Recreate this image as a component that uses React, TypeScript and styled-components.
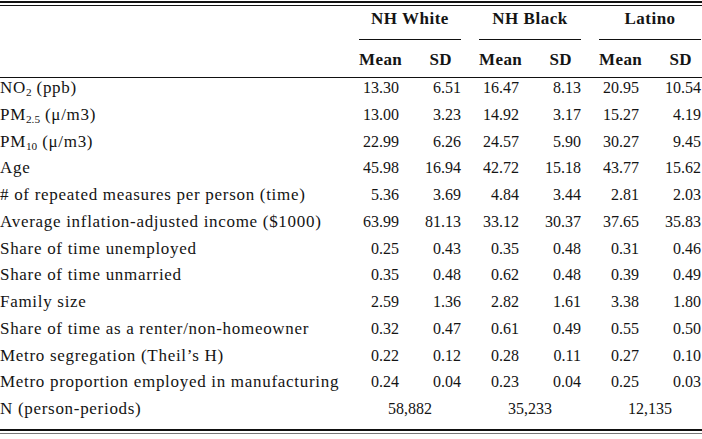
import React from "react";
import styled, { createGlobalStyle } from "styled-components";

const Global = createGlobalStyle`
  html, body { margin: 0; padding: 0; background: #fff; }
  body { font-family: "Liberation Serif", serif; color: #141414; }
`;

const Sheet = styled.div`
  width: 702px;
  height: 439px;
  box-sizing: border-box;
  padding-top: 1px;
  font-family: "Liberation Serif", serif;
`;

const DoubleRule = styled.div<{ gray?: boolean }>`
  height: 2px;
  border-top: 2px solid #111;
  border-bottom: 1px solid ${p => (p.gray ? "#777" : "#111")};
`;

const Row = styled.div<{ h: number; lh: number; top?: number; rule?: boolean }>`
  display: flex;
  align-items: flex-start;
  box-sizing: content-box;
  height: ${p => p.h - (p.top || 0)}px;
  padding-top: ${p => p.top || 0}px;
  line-height: ${p => p.lh}px;
  padding-right: 1px;
  border-bottom: ${p => (p.rule ? "1px solid #111" : "none")};
  font-size: 16px;
`;

const Label = styled.div`
  flex: 1;
  font-size: 17px;
  letter-spacing: 0.7px;
  white-space: nowrap;
  sub {
    font-size: 0.66em;
    letter-spacing: 0;
    vertical-align: -0.25em;
    line-height: 0;
  }
`;

const Groups = styled.div`
  display: flex;
  gap: 18px;
  align-self: stretch;
`;

const Group = styled.div<{ under?: boolean }>`
  width: 102px;
  display: flex;
  justify-content: center;
  box-sizing: border-box;
  border-bottom: ${p => (p.under ? "1px solid #111" : "none")};
  font-weight: ${p => (p.under ? 700 : 400)};
  font-size: ${p => (p.under ? "17px" : "inherit")};
  letter-spacing: ${p => (p.under ? "0.5px" : "0")};
`;

const Cell = styled.div<{ w: number; pad: number; bold?: boolean; left?: boolean }>`
  width: ${p => p.w}px;
  box-sizing: border-box;
  text-align: ${p => (p.left ? "left" : "right")};
  padding-right: ${p => p.pad}px;
  font-weight: ${p => (p.bold ? 700 : 400)};
  font-size: ${p => (p.bold ? "17px" : "inherit")};
  letter-spacing: ${p => (p.bold ? "0.4px" : "0")};
  white-space: nowrap;
`;

const BodyWrap = styled.div`
  padding-bottom: 3px;
`;

type R = { label: React.ReactNode; v: string[] };

const rows: R[] = [
  { label: <>NO<sub>2</sub> (ppb)</>, v: ["13.30", "6.51", "16.47", "8.13", "20.95", "10.54"] },
  { label: <>PM<sub>2.5</sub> (μ/m3)</>, v: ["13.00", "3.23", "14.92", "3.17", "15.27", "4.19"] },
  { label: <>PM<sub>10</sub> (μ/m3)</>, v: ["22.99", "6.26", "24.57", "5.90", "30.27", "9.45"] },
  { label: "Age", v: ["45.98", "16.94", "42.72", "15.18", "43.77", "15.62"] },
  { label: "# of repeated measures per person (time)", v: ["5.36", "3.69", "4.84", "3.44", "2.81", "2.03"] },
  { label: "Average inflation-adjusted income ($1000)", v: ["63.99", "81.13", "33.12", "30.37", "37.65", "35.83"] },
  { label: "Share of time unemployed", v: ["0.25", "0.43", "0.35", "0.48", "0.31", "0.46"] },
  { label: "Share of time unmarried", v: ["0.35", "0.48", "0.62", "0.48", "0.39", "0.49"] },
  { label: "Family size", v: ["2.59", "1.36", "2.82", "1.61", "3.38", "1.80"] },
  { label: "Share of time as a renter/non-homeowner", v: ["0.32", "0.47", "0.61", "0.49", "0.55", "0.50"] },
  { label: "Metro segregation (Theil’s H)", v: ["0.22", "0.12", "0.28", "0.11", "0.27", "0.10"] },
  { label: "Metro proportion employed in manufacturing", v: ["0.24", "0.04", "0.23", "0.04", "0.25", "0.03"] },
];

const totals = ["58,882", "35,233", "12,135"];
const groups = ["NH White", "NH Black", "Latino"];

export default function App() {
  return (
    <Sheet>
      <Global />
      <DoubleRule />
      <Row h={34} lh={26}>
        <Label />
        <Groups>
          {groups.map(g => (
            <Group key={g} under>{g}</Group>
          ))}
        </Groups>
      </Row>
      <Row h={37} lh={35} top={2} rule>
        <Label />
        <Groups>
          {groups.map(g => (
            <Group key={g}>
              <Cell w={51} pad={0} bold left>Mean</Cell>
              <Cell w={51} pad={9} bold>SD</Cell>
            </Group>
          ))}
        </Groups>
      </Row>
      <BodyWrap>
        {rows.map((r, i) => (
          <Row h={26.75} lh={19} key={i}>
            <Label>{r.label}</Label>
            <Groups>
              {[0, 1, 2].map(g => (
                <Group key={g}>
                  <Cell w={51} pad={11}>{r.v[g * 2]}</Cell>
                  <Cell w={51} pad={0}>{r.v[g * 2 + 1]}</Cell>
                </Group>
              ))}
            </Groups>
          </Row>
        ))}
        <Row h={26.75} lh={19}>
          <Label>N (person-periods)</Label>
          <Groups>
            {totals.map(t => (
              <Group key={t}>{t}</Group>
            ))}
          </Groups>
        </Row>
      </BodyWrap>
      <DoubleRule gray />
    </Sheet>
  );
}
